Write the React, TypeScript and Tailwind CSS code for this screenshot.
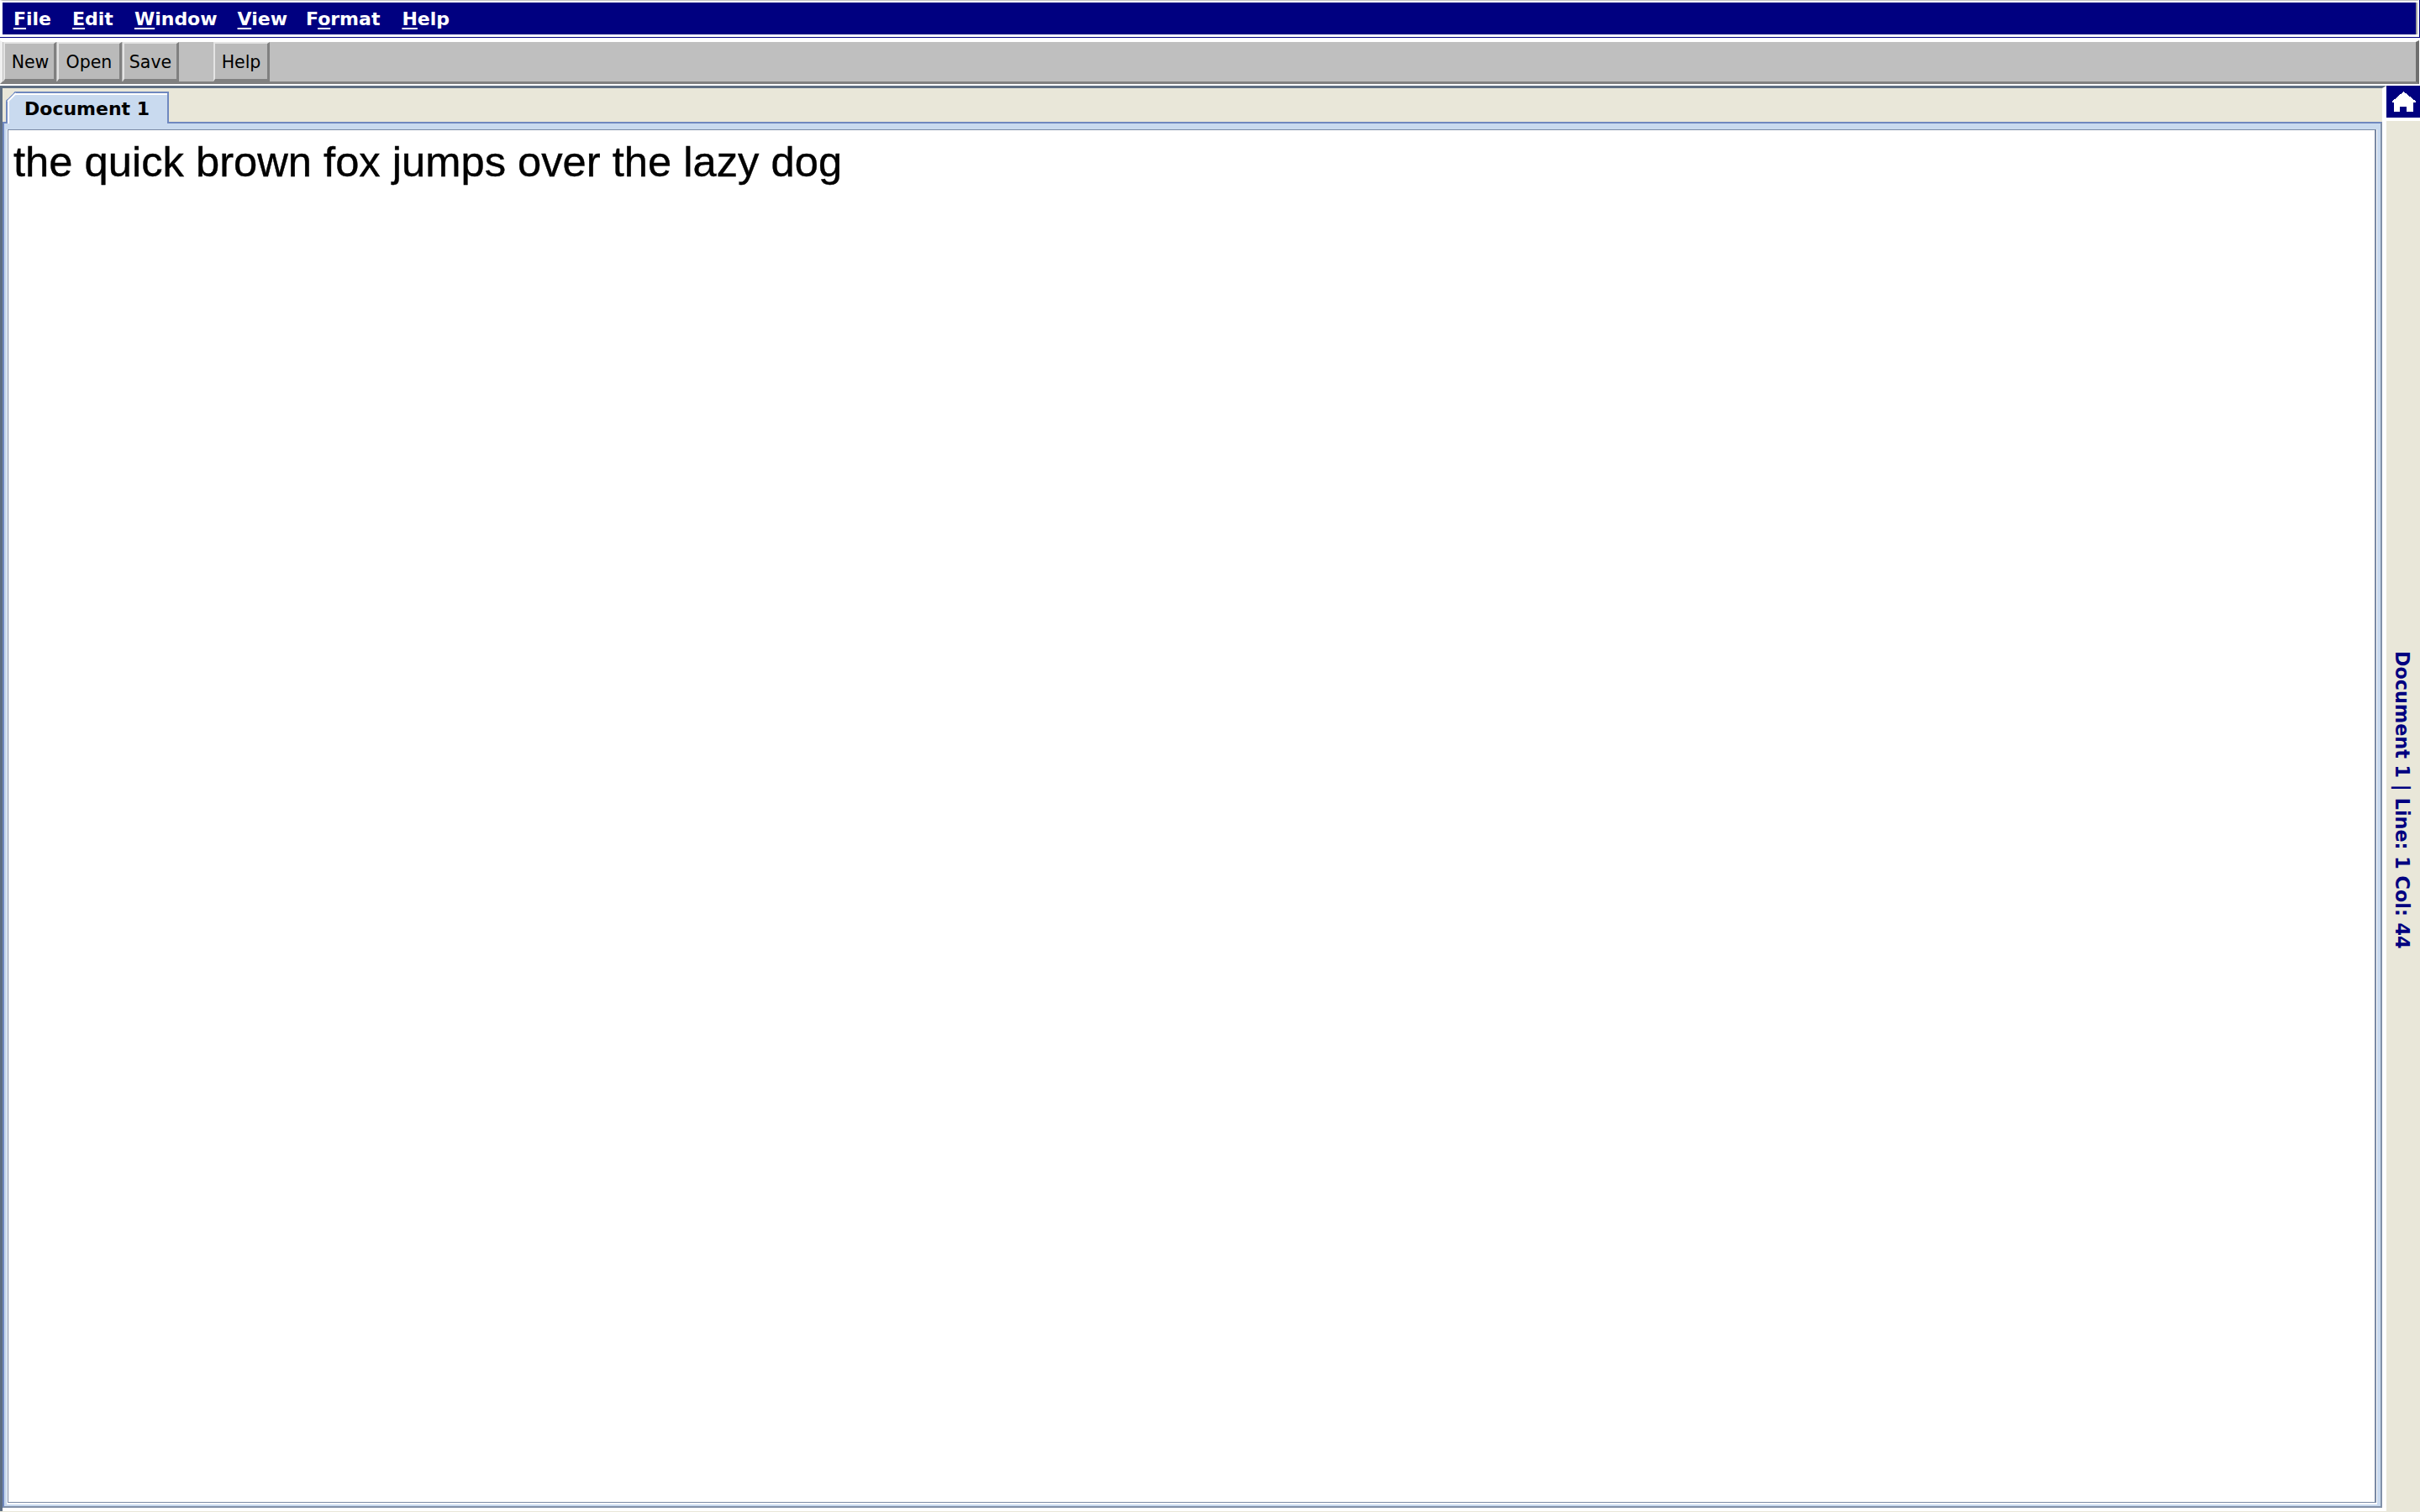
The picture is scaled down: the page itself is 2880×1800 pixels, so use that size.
const menuItems = [
  { key: 'F', rest: 'ile', gap: 'mr-[25px]' },
  { key: 'E', rest: 'dit', gap: 'mr-[25px]' },
  { key: 'W', rest: 'indow', gap: 'mr-[24px]' },
  { key: 'V', rest: 'iew', gap: 'mr-[22px]' },
  { pre: 'F', key: 'o', rest: 'rmat', gap: 'mr-[26px]' },
  { key: 'H', rest: 'elp', gap: '' },
];

function ToolButton({ label, className }: { label: string; className: string }) {
  return (
    <button
      className={`h-[47px] flex items-center justify-center pt-[2px] border-t-2 border-l-2 border-t-[#e4e4e4] border-l-[#e4e4e4] border-b-[3px] border-r-[3px] border-b-[#808080] border-r-[#808080] bg-[#bababa] text-[20.5px] text-black ${className}`}
    >
      {label}
    </button>
  );
}

export default function App() {
  return (
    <div className="w-[2880px] h-[1800px] flex flex-col overflow-hidden bg-white font-['DejaVu_Sans',sans-serif]">
      {/* menu bar */}
      <div className="h-[45px] shrink-0 border-b border-r border-[#000080]">
        <div className="h-[44px] border-t border-t-[#c0c0c0] border-l-[3px] border-l-white border-r-2 border-r-white pt-[2px] pb-[3px]">
          <div className="h-[38px] bg-[#000080] border-r-2 border-r-[#a0a0a0] flex items-center pl-[13px] text-[22px] font-bold text-white">
            {menuItems.map((m) => (
              <span key={m.key + m.rest} className={m.gap}>
                {m.pre}
                <span className="underline underline-offset-[3px] decoration-2 [text-decoration-skip-ink:none]">{m.key}</span>
                {m.rest}
              </span>
            ))}
          </div>
        </div>
      </div>

      {/* toolbar */}
      <div className="h-[57px] shrink-0 pt-[3px] pb-[2px] pr-px bg-white">
        <div className="h-[52px] flex items-start border-t-2 border-t-white border-b-[3px] border-b-[#808080] border-r-[4px] border-r-[#6e6e6e] border-l-[3px] border-l-[#f0f0f0] bg-[#bfbfbf]">
          <ToolButton label="New" className="w-[63px] ml-px pl-[2px]" />
          <ToolButton label="Open" className="w-[77px] ml-px" />
          <ToolButton label="Save" className="w-[67px] ml-px" />
          <ToolButton label="Help" className="w-[67px] ml-[41px]" />
        </div>
      </div>

      {/* desktop */}
      <div className="flex-1 flex min-h-0">
        <div className="w-[2840px] shrink-0 flex flex-col border-b border-b-[#e9e7d9]">
          <div className="flex-1 flex flex-col min-h-0 bg-[#e9e7d9] border-t-[3px] border-t-[#5e6e82] border-l-[3px] border-l-[#5e6e82] border-r-[5px] border-r-white">
            <div className="h-[40px] shrink-0 flex items-end pl-[4px]">
              <div className="relative w-[194px] h-[38px] -mb-[2px] z-10 border-t-2 border-x-2 border-[#6f88bf] bg-[#c9daef] [clip-path:polygon(11px_0,100%_0,100%_36px,calc(100%-2px)_36px,calc(100%-2px)_100%,0_100%,0_11px)]">
                <div className="h-full flex items-center pl-[18px] pb-px border-t-2 border-l-2 border-white text-[22px] font-bold text-black">
                  Document 1
                </div>
                <svg className="absolute -left-[2px] -top-[2px]" width="14" height="14" viewBox="0 0 14 14" fill="none">
                  <path d="M2 12 L12 2" stroke="#ffffff" strokeWidth="2" />
                  <path d="M0 11 L11 0" stroke="#6f88bf" strokeWidth="2" />
                </svg>
              </div>
            </div>
            <div className="flex-1 min-h-0 flex flex-col bg-white pb-[4px]">
              <div className="flex-1 min-h-0 border-t-2 border-r-2 border-b-2 border-l-2 border-t-[#6f88bf] border-l-[#6f88bf] border-r-[#8190a8] border-b-[#8190a8] bg-[#c9daef] pt-[7px] pr-[4px] pb-[2px] pl-[3px]">
                <div className="h-full border-l border-r border-b-2 border-white">
                  <div className="h-full border-t border-l border-r-2 border-b border-[#7a8aa5] bg-white pl-[6px] pt-[9px] font-['Liberation_Sans',sans-serif] text-[50.7px] leading-[58px] text-black [-webkit-text-stroke:0.4px_black]">
                    the quick brown fox jumps over the lazy dog
                  </div>
                </div>
              </div>
            </div>
          </div>
        </div>

        <div className="w-[40px] shrink-0 flex flex-col bg-[#e9e7d9]">
          <div className="h-[38px] shrink-0 bg-[#000080] flex items-center pl-[7px]">
            <svg width="28" height="24" viewBox="0 0 28 24" fill="#fff" shapeRendering="crispEdges">
              <path d="M13.5 0 L28 11.5 V12.5 H25 V24 H17 V18 H9 V24 H1.5 V12.5 H0 V11.5 Z" />
            </svg>
          </div>
          <div className="h-[4px] shrink-0 bg-white" />
          <div className="flex-1 flex items-center justify-center pb-[40px] pr-[3px]">
            <span className="[writing-mode:vertical-rl] text-[22.3px] font-bold text-[#000080]">
              Document 1 | Line: 1 Col: 44
            </span>
          </div>
        </div>
      </div>
    </div>
  );
}
